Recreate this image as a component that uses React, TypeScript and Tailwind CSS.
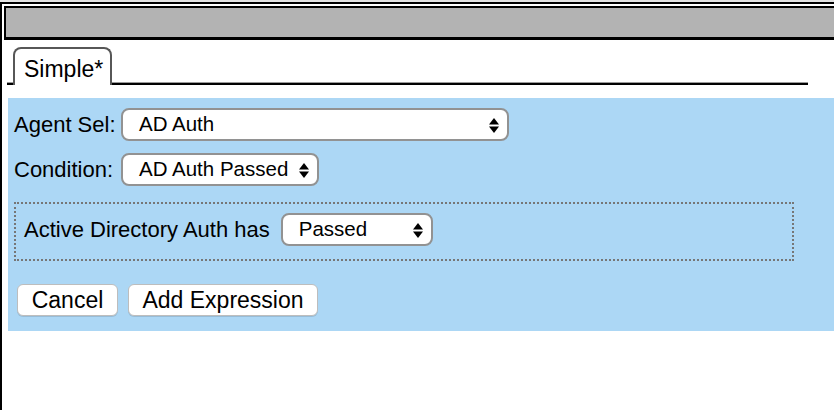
function Arrows() {
  return (
    <svg width="10" height="15" viewBox="0 0 10 15" className="shrink-0 mt-[2px]">
      <path d="M5 0 L10 6.5 L0 6.5 Z" fill="#000" />
      <path d="M0 8.5 L10 8.5 L5 15 Z" fill="#000" />
    </svg>
  );
}

function Select({ value, width, height = 33 }: { value: string; width: number; height?: number }) {
  return (
    <div
      className="flex items-center justify-between bg-white border-2 border-[#929292] rounded-[8px] pl-[16px] pr-[8px] text-[20.5px] text-black leading-none shrink-0"
      style={{ width, height }}
    >
      <span>{value}</span>
      <Arrows />
    </div>
  );
}

function Button({ label, width }: { label: string; width: number }) {
  return (
    <div
      className="flex items-center justify-center h-[32px] bg-white border border-[#bdbdbd] rounded-[6px] shadow-[0_1px_0_rgba(0,0,0,0.12)] text-[23px] text-black leading-none shrink-0"
      style={{ width }}
    >
      {label}
    </div>
  );
}

export default function App() {
  return (
    <div className="w-[834px] h-[410px] bg-white overflow-hidden flex flex-col font-['Liberation_Sans',Arial,sans-serif]">
      <div className="h-[2px] bg-[#e4e4e4] shrink-0" />
      <div className="flex-1 border-l-2 border-t-2 border-black pt-[2px] pl-[2px] flex flex-col">
        {/* title bar */}
        <div className="h-[34px] bg-[#b3b3b3] border-t-2 border-l-2 border-b-[3px] border-black shrink-0" />

        {/* tab strip */}
        <div className="flex items-end mt-[7px] ml-[3px] shrink-0">
          <div className="w-[6px] h-[3px] bg-black border-t border-[#9a9a9a]" />
          <div className="w-[99px] h-[38px] border-t-2 border-l-2 border-r-2 border-[#575757] rounded-t-[8px] pl-[9px] pt-[9px] text-[23px] leading-none text-black">
            Simple*
          </div>
          <div className="w-[696px] h-[3px] bg-black border-t border-[#9a9a9a]" />
        </div>

        {/* editor panel */}
        <div className="ml-[4px] mt-[13px] h-[233px] bg-[#acd7f5] pl-[6px] pt-[10px] text-[22px] text-black leading-none">
          <div className="flex items-center">
            <span className="w-[107px]">Agent Sel:</span>
            <Select value="AD Auth" width={388} />
          </div>
          <div className="flex items-center mt-[12px]">
            <span className="w-[107px]">Condition:</span>
            <Select value="AD Auth Passed" width={198} />
          </div>

          <div className="mt-[16px] w-[780px] h-[59px] border-2 border-dotted border-[#767676] flex items-start pt-[9px] pl-[8px]">
            <div className="flex items-center">
              <span className="mr-[11px]">Active Directory Auth has</span>
              <Select value="Passed" width={152} />
            </div>
          </div>

          <div className="flex gap-[10px] mt-[23px] ml-[3px]">
            <Button label="Cancel" width={101} />
            <Button label="Add Expression" width={190} />
          </div>
        </div>
      </div>
    </div>
  );
}
